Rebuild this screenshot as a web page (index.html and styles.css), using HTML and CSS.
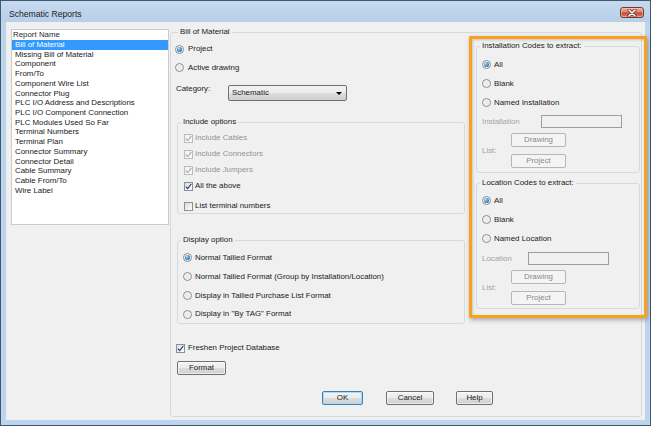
FILE: index.html
```html
<!DOCTYPE html>
<html>
<head>
<meta charset="utf-8">
<title>Schematic Reports</title>
<link rel="stylesheet" href="styles.css">
</head>
<body>
<div class="window">
  <div class="titlebar">
    <span class="title">Schematic Reports</span>
    <span class="close">
      <svg width="10" height="8" viewBox="0 0 10 8"><path d="M2 1 L8 7 M8 1 L2 7" stroke="#5a2018" stroke-width="3" stroke-linecap="round"/><path d="M2 1 L8 7 M8 1 L2 7" stroke="#ffffff" stroke-width="1.6" stroke-linecap="round"/></svg>
    </span>
  </div>
  <div class="client">
    <div class="listbox">
      <div class="list-head">Report Name</div>
      <div class="item sel">Bill of Material</div>
      <div class="item">Missing Bill of Material</div>
      <div class="item">Component</div>
      <div class="item">From/To</div>
      <div class="item">Component Wire List</div>
      <div class="item">Connector Plug</div>
      <div class="item">PLC I/O Address and Descriptions</div>
      <div class="item">PLC I/O Component Connection</div>
      <div class="item">PLC Modules Used So Far</div>
      <div class="item">Terminal Numbers</div>
      <div class="item">Terminal Plan</div>
      <div class="item">Connector Summary</div>
      <div class="item">Connector Detail</div>
      <div class="item">Cable Summary</div>
      <div class="item">Cable From/To</div>
      <div class="item">Wire Label</div>
    </div>

    <div class="group bom">
      <div class="gtitle bom-title">Bill of Material</div>
      <div class="bom-body">
        <div class="leftcol">
          <div class="row r-first"><span class="radio on"></span><span class="lbl-radio-wide">Project</span></div>
          <div class="row r-second"><span class="radio"></span><span class="lbl-radio-wide">Active drawing</span></div>
          <div class="catrow">
            <span class="catlabel">Category:</span>
            <div class="combo"><span>Schematic</span><span class="arrow"></span></div>
          </div>

          <div class="group inc">
            <div class="gtitle inc-title">Include options</div>
            <div class="crow first dis"><span class="check dis"><svg width="7" height="7" viewBox="0 0 7 7"><path d="M0.8 3.6 L2.7 5.5 L6.3 0.9" fill="none" stroke="#a9a9a9" stroke-width="1.1"/></svg></span><span class="ctext">Include Cables</span></div>
            <div class="crow dis"><span class="check dis"><svg width="7" height="7" viewBox="0 0 7 7"><path d="M0.8 3.6 L2.7 5.5 L6.3 0.9" fill="none" stroke="#a9a9a9" stroke-width="1.1"/></svg></span><span class="ctext">Include Connectors</span></div>
            <div class="crow dis"><span class="check dis"><svg width="7" height="7" viewBox="0 0 7 7"><path d="M0.8 3.6 L2.7 5.5 L6.3 0.9" fill="none" stroke="#a9a9a9" stroke-width="1.1"/></svg></span><span class="ctext">Include Jumpers</span></div>
            <div class="crow"><span class="check"><svg width="7" height="7" viewBox="0 0 7 7"><path d="M0.8 3.6 L2.7 5.5 L6.3 0.9" fill="none" stroke="#2c4790" stroke-width="1.2"/></svg></span><span class="ctext">All the above</span></div>
            <div class="crow last"><span class="check"></span><span class="ctext">List terminal numbers</span></div>
          </div>

          <div class="group disp">
            <div class="gtitle disp-title">Display option</div>
            <div class="drow first"><span class="radio on"></span><span class="rtext">Normal Tallied Format</span></div>
            <div class="drow"><span class="radio"></span><span class="rtext">Normal Tallied Format (Group by Installation/Location)</span></div>
            <div class="drow"><span class="radio"></span><span class="rtext">Display in Tallied Purchase List Format</span></div>
            <div class="drow last"><span class="radio"></span><span class="rtext">Display in "By TAG" Format</span></div>
          </div>

          <div class="crow fresh"><span class="check"><svg width="7" height="7" viewBox="0 0 7 7"><path d="M0.8 3.6 L2.7 5.5 L6.3 0.9" fill="none" stroke="#2c4790" stroke-width="1.2"/></svg></span><span class="ftext">Freshen Project Database</span></div>
          <div class="btn format">Format</div>
        </div>

        <div class="rightcol">
          <div class="highlight"></div>
          <div class="group codes inst">
            <div class="gtitle codes-title">Installation Codes to extract:</div>
            <div class="drow first"><span class="radio on"></span><span class="rtext">All</span></div>
            <div class="drow"><span class="radio"></span><span class="rtext">Blank</span></div>
            <div class="drow"><span class="radio"></span><span class="rtext">Named Installation</span></div>
            <div class="field">
              <span class="flabel w-inst">Installation</span>
              <span class="tbox"></span>
            </div>
            <div class="listrow">
              <span class="flabel w-list">List:</span>
              <div class="btncol">
                <div class="btn disabled small">Drawing</div>
                <div class="btn disabled small">Project</div>
              </div>
            </div>
          </div>
          <div class="group codes loc">
            <div class="gtitle codes-title">Location Codes to extract:</div>
            <div class="drow first"><span class="radio on"></span><span class="rtext">All</span></div>
            <div class="drow"><span class="radio"></span><span class="rtext">Blank</span></div>
            <div class="drow"><span class="radio"></span><span class="rtext">Named Location</span></div>
            <div class="field">
              <span class="flabel w-loc">Location</span>
              <span class="tbox"></span>
            </div>
            <div class="listrow">
              <span class="flabel w-list">List:</span>
              <div class="btncol">
                <div class="btn disabled small">Drawing</div>
                <div class="btn disabled small">Project</div>
              </div>
            </div>
          </div>
        </div>
      </div>

      <div class="actions">
        <div class="btn ok">OK</div>
        <div class="btn cancel">Cancel</div>
        <div class="btn help">Help</div>
      </div>
    </div>
  </div>
</div>
</body>
</html>
```

FILE: styles.css
```css
* {
  box-sizing: border-box;
}

html, body {
  margin: 0;
  padding: 0;
}

body {
  width: 651px;
  height: 426px;
  overflow: hidden;
  background: #ffffff;
  font-family: "Liberation Sans", Arial, sans-serif;
  font-size: 7.9px;
  line-height: 10px;
  color: #202020;
}

.window {
  width: 651px;
  height: 426px;
  border: 1px solid #41596f;
  background: #bcd4ec;
  display: flex;
  flex-direction: column;
}

/* ---------- title bar ---------- */
.titlebar {
  height: 21px;
  flex: none;
  display: flex;
  align-items: flex-start;
  justify-content: space-between;
  padding: 0 6px 0 8px;
  background: linear-gradient(#c6daef, #b7cfe9);
}

.title {
  margin-top: 8px;
  font-size: 8.6px;
  line-height: 10px;
  color: #1c1c1c;
}

.close {
  margin-top: 6px;
  width: 24px;
  height: 11px;
  border: 1px solid #7b3a30;
  border-radius: 3px;
  background: linear-gradient(#eab2a4 0%, #d9806c 45%, #c54a33 55%, #d87a62 100%);
  display: flex;
  align-items: center;
  justify-content: center;
  box-shadow: inset 0 0 0 1px rgba(255, 220, 210, 0.45);
}

.close svg {
  display: block;
}

/* ---------- client area ---------- */
.client {
  flex: 1;
  margin: 0 5px 5px 5px;
  background: #f0f0f0;
  display: flex;
  align-items: flex-start;
  padding: 7px 3px 3px 5px;
}

/* ---------- report list ---------- */
.listbox {
  width: 158px;
  height: 196px;
  flex: none;
  background: #ffffff;
  border: 1px solid #cbcbcb;
}

.list-head {
  height: 10px;
  line-height: 10px;
  padding-left: 1px;
  color: #2a2a2a;
}

.item {
  height: 9.73px;
  line-height: 9.73px;
  padding-left: 3px;
  white-space: nowrap;
}

.item.sel {
  background: #3399ff;
  color: #ffffff;
}

/* ---------- group boxes ---------- */
.group {
  border: 1px solid #d3dbe1;
  border-radius: 3px;
  display: flex;
  flex-direction: column;
}

.gtitle {
  align-self: flex-start;
  margin-top: -6px;
  height: 10px;
  line-height: 10px;
  padding: 0 2px;
  background: #f0f0f0;
  white-space: nowrap;
}

.bom {
  width: 472px;
  flex: none;
  margin: 3px 0 0 1px;
  padding: 0 1px 11px 4px;
}

.bom-title {
  margin-left: 3px;
}

.bom-body {
  display: flex;
  align-items: flex-start;
}

/* ---------- left column ---------- */
.leftcol {
  width: 290px;
  flex: none;
  display: flex;
  flex-direction: column;
}

.row {
  display: flex;
  align-items: center;
}

.r-first {
  margin-top: 3px;
  height: 18px;
}

.r-second {
  height: 19px;
}

.lbl-radio-wide {
  margin-left: 4px;
}

.catrow {
  margin-top: 8px;
  height: 16px;
  display: flex;
  align-items: flex-start;
}

.catlabel {
  width: 52px;
  margin-left: 1px;
  margin-top: -1px;
}

.combo {
  width: 119px;
  height: 16px;
  border: 1px solid #707070;
  border-radius: 2px;
  background: linear-gradient(#f3f3f3 0%, #ebebeb 50%, #dddddd 51%, #cfcfcf 100%);
  display: flex;
  align-items: center;
  justify-content: space-between;
  padding: 0 4px 0 3px;
}

.arrow {
  width: 0;
  height: 0;
  border-left: 3px solid transparent;
  border-right: 3px solid transparent;
  border-top: 3px solid #000000;
}

/* include options */
.inc {
  margin: 21px 0 0 2px;
  width: 288px;
  padding-left: 6px;
}

.inc-title {
  margin-left: -3px;
}

.crow {
  height: 16px;
  display: flex;
  align-items: center;
}

.crow.first {
  margin-top: 3px;
}

.crow.last {
  margin-top: 5px;
  height: 14px;
}

.crow.dis .ctext {
  color: #939393;
}

.ctext {
  margin-left: 2px;
}

.check {
  width: 9px;
  height: 9px;
  flex: none;
  border: 1px solid #8e8f8f;
  background: linear-gradient(135deg, #dedede, #fbfbfb);
  display: flex;
  align-items: center;
  justify-content: center;
}

.check.dis {
  border-color: #bcbcbc;
  background: #f4f4f4;
}

.check svg {
  display: block;
}

/* display option */
.disp {
  margin: 26px 0 0 2px;
  width: 288px;
  padding-left: 5px;
}

.disp-title {
  margin-left: -2px;
}

.drow {
  height: 19px;
  display: flex;
  align-items: center;
}

.drow.first {
  margin-top: 3px;
}

.disp .drow.last {
  height: 18px;
}

.rtext {
  margin-left: 3px;
  white-space: nowrap;
}

.radio {
  width: 9px;
  height: 9px;
  flex: none;
  border-radius: 50%;
  border: 1px solid #8a8c8e;
  background: radial-gradient(circle at 50% 50%, #e4e4e4 0%, #f6f6f6 70%, #ffffff 100%);
  display: flex;
  align-items: center;
  justify-content: center;
}

.radio.on::after {
  content: "";
  width: 5px;
  height: 5px;
  border-radius: 50%;
  background: radial-gradient(circle at 38% 35%, #b4e2fb 0%, #3b8dd0 50%, #134e88 100%);
}

.fresh {
  margin-top: 16px;
  padding-left: 1px;
}

.ftext {
  margin-left: 3px;
}

/* ---------- buttons ---------- */
.btn {
  height: 14px;
  border: 1px solid #707070;
  border-radius: 2px;
  background: linear-gradient(#f3f3f3 0%, #ebebeb 50%, #dddddd 51%, #cfcfcf 100%);
  display: flex;
  align-items: center;
  justify-content: center;
  line-height: 10px;
  box-shadow: inset 0 0 0 1px rgba(255, 255, 255, 0.6);
}

.format {
  margin: 5px 0 0 2px;
  width: 49px;
}

.btn.disabled {
  border-color: #b3b7ba;
  background: #f4f4f4;
  color: #8a8a8a;
  box-shadow: none;
}

.btn.small {
  width: 55px;
}

.actions {
  margin-top: 16px;
  display: flex;
  justify-content: center;
}

.ok {
  width: 41px;
  border-color: #3c7fb1;
  box-shadow: inset 0 0 0 1px #a9dcf6;
}

.cancel {
  width: 48px;
  margin-left: 23px;
}

.help {
  width: 37px;
  margin-left: 22px;
}

/* ---------- right column ---------- */
.rightcol {
  width: 164px;
  flex: none;
  margin-left: 11px;
  position: relative;
  display: flex;
  flex-direction: column;
}

.highlight {
  position: absolute;
  left: -7px;
  top: -1px;
  width: 178px;
  height: 282px;
  border: 3px solid #f7a11c;
  border-radius: 1px;
  box-shadow: 1px 2px 4px rgba(0, 0, 0, 0.3), inset 1px 1px 3px rgba(0, 0, 0, 0.18);
  pointer-events: none;
}

.codes {
  width: 164px;
  padding: 0 0 0 5px;
}

.codes-title {
  margin-left: -2px;
}

.inst {
  margin-top: 9px;
  padding-bottom: 4px;
}

.loc {
  margin-top: 10px;
  padding-bottom: 3px;
}

.inst .drow.first {
  margin-top: 4px;
}

.loc .drow.first {
  margin-top: 3px;
}

.field {
  height: 13px;
  display: flex;
  align-items: center;
}

.inst .field {
  margin-top: 3px;
}

.loc .field {
  margin-top: 4px;
}

.flabel {
  color: #a3a3a3;
  flex: none;
}

.w-inst {
  width: 59px;
}

.w-loc {
  width: 46px;
}

.w-list {
  width: 29px;
}

.tbox {
  width: 81px;
  height: 13px;
  border: 1px solid #9d9d9d;
  background: #f0f0f0;
}

.listrow {
  margin-top: 5px;
  display: flex;
  align-items: center;
}

.btncol {
  display: flex;
  flex-direction: column;
  gap: 7px;
}
```
